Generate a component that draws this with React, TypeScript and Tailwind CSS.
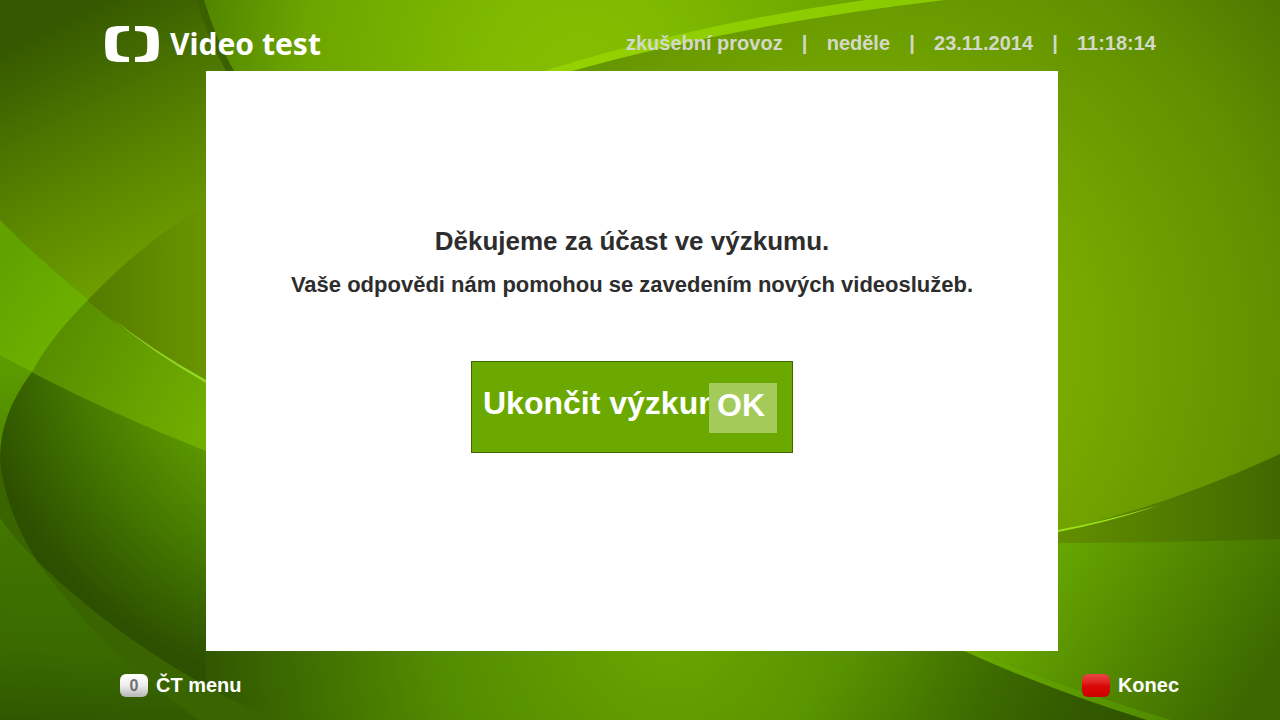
import { useState } from 'react';

const statusItems = ['zkušební provoz', 'neděle', '23.11.2014', '11:18:14'];

function Backdrop() {
    return (
        <svg
            className="absolute inset-0 -z-10 h-full w-full"
            viewBox="0 0 1280 720"
            preserveAspectRatio="none"
            aria-hidden="true"
        >
            <defs>
                <linearGradient id="leftTop" gradientUnits="userSpaceOnUse" x1="60" y1="20" x2="180" y2="260">
                    <stop offset="0" stopColor="#355800" />
                    <stop offset="0.5" stopColor="#537f00" />
                    <stop offset="1" stopColor="#709f00" />
                </linearGradient>
                <radialGradient id="top" gradientUnits="userSpaceOnUse" cx="580" cy="80" r="400">
                    <stop offset="0" stopColor="#85be00" />
                    <stop offset="0.25" stopColor="#80b900" />
                    <stop offset="0.7" stopColor="#6da400" />
                    <stop offset="1" stopColor="#4d8000" />
                </radialGradient>
                <radialGradient id="right" gradientUnits="userSpaceOnUse" cx="850" cy="350" r="620">
                    <stop offset="0" stopColor="#7db200" />
                    <stop offset="0.35" stopColor="#78ab00" />
                    <stop offset="0.7" stopColor="#608f00" />
                    <stop offset="1" stopColor="#426c00" />
                </radialGradient>
                <linearGradient id="band" gradientUnits="userSpaceOnUse" x1="0" y1="270" x2="206" y2="420">
                    <stop offset="0" stopColor="#62a200" />
                    <stop offset="0.4" stopColor="#6fb200" />
                    <stop offset="1" stopColor="#72b200" />
                </linearGradient>
                <radialGradient id="lens" gradientUnits="userSpaceOnUse" cx="330" cy="330" r="380">
                    <stop offset="0" stopColor="#69a900" />
                    <stop offset="0.45" stopColor="#5c9800" />
                    <stop offset="0.68" stopColor="#457800" />
                    <stop offset="0.95" stopColor="#2c4f00" />
                </radialGradient>
                <linearGradient id="lensBand" gradientUnits="userSpaceOnUse" x1="50" y1="340" x2="206" y2="420">
                    <stop offset="0" stopColor="#568e00" />
                    <stop offset="1" stopColor="#70ae00" />
                </linearGradient>
                <linearGradient id="lensTop" x1="0" y1="0" x2="1" y2="0">
                    <stop offset="0" stopColor="#547b00" />
                    <stop offset="1" stopColor="#6a9400" />
                </linearGradient>
                <linearGradient id="leftLow" gradientUnits="userSpaceOnUse" x1="20" y1="356" x2="0" y2="720">
                    <stop offset="0" stopColor="#5d9d00" />
                    <stop offset="0.5" stopColor="#407400" />
                    <stop offset="0.8" stopColor="#3a6a00" />
                    <stop offset="1" stopColor="#305700" />
                </linearGradient>
                <radialGradient id="bottom" gradientUnits="userSpaceOnUse" cx="670" cy="620" r="480">
                    <stop offset="0" stopColor="#6aa700" />
                    <stop offset="0.5" stopColor="#528b00" />
                    <stop offset="1" stopColor="#2f5400" />
                </radialGradient>
                <linearGradient id="bottomShade" gradientUnits="userSpaceOnUse" x1="900" y1="600" x2="1080" y2="760">
                    <stop offset="0" stopColor="#2f5400" stopOpacity="0" />
                    <stop offset="1" stopColor="#2f5400" stopOpacity="0.7" />
                </linearGradient>
                <linearGradient id="rightShade" x1="0" y1="0" x2="1" y2="0">
                    <stop offset="0" stopColor="#628f00" />
                    <stop offset="1" stopColor="#416700" />
                </linearGradient>
                <linearGradient id="rightLow" gradientUnits="userSpaceOnUse" x1="1060" y1="550" x2="1260" y2="680">
                    <stop offset="0" stopColor="#66a500" />
                    <stop offset="1" stopColor="#3c6700" />
                </linearGradient>
                <linearGradient id="topStripe" x1="0" y1="0" x2="1" y2="0">
                    <stop offset="0" stopColor="#95d200" />
                    <stop offset="1" stopColor="#88c900" />
                </linearGradient>
                <linearGradient id="lowStripe" x1="0" y1="0" x2="1" y2="0">
                    <stop offset="0" stopColor="#69aa00" />
                    <stop offset="1" stopColor="#4f8a00" />
                </linearGradient>
            </defs>

            <path d="M0 0H1280V720H0Z" fill="url(#right)" />
            <path d="M200 0H900Q700 26 543 71L420 300H206Z" fill="url(#top)" />
            <path d="M0 0H200L230 71L400 420L206 382Q90 310 0 220Z" fill="url(#leftTop)" />
            <path d="M196 0H204Q216 40 234 71H226Q210 42 196 0Z" fill="#3a6000" />
            <path d="M543 71Q700 23 865 0H945Q740 24 572 71Z" fill="url(#topStripe)" />

            {/* left side */}
            <path d="M0 356Q100 408 206 451V720H0Z" fill="url(#leftLow)" />
            <path d="M0 220Q90 310 206 382V451Q100 408 0 356Z" fill="url(#band)" />
            <path d="M206 204Q137 247 87 301Q142 347 206 382Z" fill="url(#lensTop)" />
            <path d="M0 460V518Q17 542 37 561Q100 650 198 720H300V600Z" fill="#396400" />
            <path d="M32 372Q0 414 0 458Q4 508 37 561Q110 632 206 686V451Q110 413 32 372Z" fill="url(#lens)" />
            <path d="M87 301Q50 338 32 372Q110 413 206 451V382Q142 347 87 301Z" fill="url(#lensBand)" />

            {/* bottom and right side */}
            <path d="M206 640H1000L1172 720H275Q238 704 206 686Z" fill="url(#bottom)" />
            <path d="M760 651H964L1147 720H760Z" fill="url(#bottomShade)" />
            <path d="M1058 531Q1170 505 1280 454V545H1058Z" fill="url(#rightShade)" />
            <path d="M1058 543Q1160 543 1280 539V720H1172Q1070 690 978 651H964V543Z" fill="url(#rightLow)" />
            <path d="M964 651Q1055 692 1147 720H1172Q1070 690 978 651Z" fill="url(#lowStripe)" />
            <path d="M110 317Q152 350 206 380V383Q152 352 110 317Z" fill="#95d824" />
            <path d="M1058 530Q1110 520 1160 505Q1110 522 1058 532Z" fill="#9be315" />
        </svg>
    );
}

function Logo() {
    return (
        <svg className="h-[36px] w-[54px]" viewBox="0 0 54 36" fill="#fff" aria-hidden="true">
            <path d="M24 0V5C15 5.500 12.500 6.500 12 11Q11.500 18 12 25C12.500 29.500 15 30.500 24 31V36H17C4 36 1 34 .5 26Q-.3 18 .5 10C1 2 4 0 17 0Z" />
            <path d="M30 0V5C39 5.500 41.500 6.500 42 11Q42.500 18 42 25C41.500 29.500 39 30.500 30 31V36H37C50 36 53 34 53.500 26Q54.300 18 53.500 10C53 2 50 0 37 0Z" />
        </svg>
    );
}

export default function App() {
    const [finished, setFinished] = useState(false);

    return (
        <div className="relative isolate flex min-h-screen flex-col overflow-hidden font-['Liberation_Sans',Arial,sans-serif] font-bold">
            <Backdrop />

            <header className="flex h-[71px] items-center justify-between pt-4 pr-[124px] pl-[105px]">
                <div className="flex items-center gap-[11px]">
                    <Logo />
                    <h1 className="font-['Noto_Sans','Open_Sans',sans-serif] text-[30px] leading-9 text-white">Video test</h1>
                </div>
                <ul className="flex pb-0.5 text-[20px] leading-6 text-[#d4d8c8]">
                    {statusItems.map((item, i) => (
                        <li key={item} className="flex">
                            {i > 0 && <span className="w-[44px] text-center">|</span>}
                            {item}
                        </li>
                    ))}
                </ul>
            </header>

            <main className="mr-[222px] ml-[206px] flex flex-1 flex-col items-center bg-white pt-[154px] text-[#2d2d2d]">
                <h2 className="text-[26px] leading-8">Děkujeme za účast ve výzkumu.</h2>
                <p className="mt-[14px] text-[22px] leading-7">Vaše odpovědi nám pomohou se zavedením nových videoslužeb.</p>
                <button
                    type="button"
                    onClick={() => setFinished(true)}
                    disabled={finished}
                    className="mt-[62px] flex h-[92px] w-[322px] items-start border border-[#416700] bg-[#6ca900] pr-[15px] pl-[11px] text-left text-[32px] text-white"
                >
                    <span className="mt-[21px] min-w-0 flex-1 overflow-hidden leading-10 whitespace-nowrap">Ukončit výzkum</span>
                    <span className="mt-[21px] h-[50px] w-[68px] shrink-0 bg-[#a4ca59] pl-2 leading-[44px]">OK</span>
                </button>
            </main>

            <footer className="flex h-[69px] items-center justify-between pr-[101px] pl-[120px] text-[20px] leading-6 text-white">
                <button type="button" className="flex items-center gap-2">
                    <span className="h-[23px] w-[28px] rounded-md bg-linear-to-b from-white via-[#eeeeee] to-[#b5b5b5] text-center text-base leading-6 text-[#707070]">
                        0
                    </span>
                    <span className="pb-0.5">ČT menu</span>
                </button>
                <button type="button" className="flex items-center gap-2">
                    <span className="h-[23px] w-[28px] rounded-md bg-linear-to-b from-[#e84545] via-[#dc0808] to-[#cc0000]" />
                    <span className="pb-0.5">Konec</span>
                </button>
            </footer>
        </div>
    );
}
